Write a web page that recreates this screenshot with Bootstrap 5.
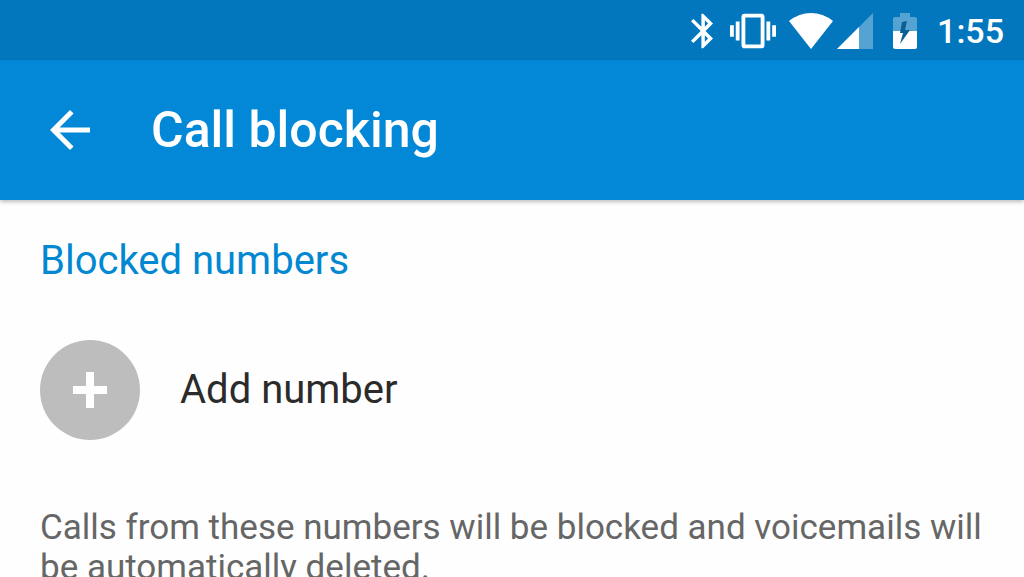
<!DOCTYPE html>
<html lang="en">
<head>
<meta charset="utf-8">
<meta name="viewport" content="width=device-width, initial-scale=1">
<title>Call blocking</title>
<link href="https://cdn.jsdelivr.net/npm/bootstrap@5.3.0/dist/css/bootstrap.min.css" rel="stylesheet">
<style>
  body { font-family: Roboto, "Liberation Sans", sans-serif; color: #2b2b2b; background: #fefefe; }
  svg { display: block; flex: none; fill: #fff; }
  .status-bar { height: 60px; background: #0277bd; padding: 2px 20px 0; }
  .wifi { margin-left: 12px; }
  .battery { margin-left: 20px; }
  .clock { font-size: 34px; line-height: 40px; font-weight: 500; margin-left: 20px; }
  .app-bar { height: 140px; background: #0288d7; padding: 0 40px; gap: 51px; box-shadow: 0 2px 4px rgba(0, 0, 0, .25); }
  .app-title { font-size: 50px; line-height: 60px; font-weight: 500; }
  .content { padding: 36px 40px 0; }
  .section-title { font-size: 40px; line-height: 50px; font-weight: 400; color: #0288d1; margin-bottom: 54px; }
  .add-row { gap: 40px; font-size: 40px; line-height: 50px; margin-bottom: 68px; }
  .add-icon { width: 100px; height: 100px; background: #bdbdbd; }
  .note { font-size: 35px; line-height: 40px; color: #666; }
</style>
</head>
<body>
<div class="status-bar d-flex align-items-center justify-content-end text-white">
  <svg width="22" height="36" viewBox="5 2 12.71 20" role="img" aria-label="Bluetooth"><path d="M17.71 7.71 12 2h-1v7.59L6.41 5 5 6.41 10.59 12 5 17.59 6.41 19 11 14.41V22h1l5.71-5.71-4.3-4.29 4.3-4.29zM13 5.83l1.88 1.88L13 9.59V5.83zm1.88 10.46L13 18.17v-3.76l1.88 1.88z"/></svg>
  <svg class="ms-3" width="48" height="46" viewBox="0 0 24 24" role="img" aria-label="Vibrate"><path d="M0 15h2V9H0v6zm3 2h2V7H3v10zm19-8v6h2V9h-2zm-3 8h2V7h-2v10zM16.5 3h-9C6.67 3 6 3.67 6 4.500v15c0 .83.67 1.500 1.500 1.500h9c.83 0 1.500-.67 1.500-1.500v-15c0-.83-.67-1.500-1.500-1.500zM16 19H8V5h8v14z"/></svg>
  <svg class="wifi" width="44" height="36" viewBox="0 0 44 36" role="img" aria-label="Wi-Fi"><path d="M0 8Q10 0 22 0T44 8L22 36Z"/></svg>
  <svg class="ms-1" width="36" height="36" viewBox="0 0 36 36" role="img" aria-label="Signal"><path d="M0 36 36 0V36Z" fill-opacity=".33"/><path d="M0 36 22 14V36Z"/></svg>
  <svg class="battery" width="24" height="36" viewBox="0 0 24 36" role="img" aria-label="Battery charging"><path d="M0 18V6q0-2 2-2H7V0H17V4h5q2 0 2 2V18Z" fill-opacity=".33"/><path d="M0 18H24V34q0 2-2 2H2q-2 0-2-2Z"/><path d="M14 8 12 17H17L7 31 10 20H7L9 9Z" fill="#0a5f93"/></svg>
  <span class="clock">1:55</span>
</div>
<header class="app-bar d-flex align-items-center text-white">
  <button type="button" class="btn p-0 border-0" aria-label="Back">
    <svg width="60" height="60" viewBox="0 0 24 24"><path d="M20 11H7.830l5.590-5.590L12 4l-8 8 8 8 1.410-1.410L7.830 13H20v-2z"/></svg>
  </button>
  <h1 class="app-title m-0">Call blocking</h1>
</header>
<main class="content">
  <h2 class="section-title mt-0">Blocked numbers</h2>
  <button type="button" class="add-row btn p-0 border-0 rounded-0 d-flex align-items-center text-reset text-start">
    <span class="add-icon rounded-circle d-flex align-items-center justify-content-center">
      <svg width="34" height="36" viewBox="0 0 34 36" aria-hidden="true"><path d="M13 0h8v14h13v8H21v14h-8V22H0v-8h13z"/></svg>
    </span>
    <span>Add number</span>
  </button>
  <p class="note m-0">Calls from these numbers will be blocked and voicemails will be automatically deleted.</p>
</main>
<script src="https://cdn.jsdelivr.net/npm/bootstrap@5.3.0/dist/js/bootstrap.bundle.min.js"></script>
</body>
</html>
